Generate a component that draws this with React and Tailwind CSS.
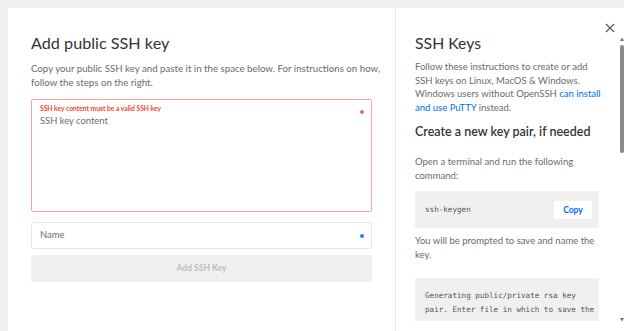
import React from "react";

export default function App() {
  const font = { fontFamily: "Lato, 'Open Sans', sans-serif" };
  const mono = { fontFamily: "'DejaVu Sans Mono', 'Liberation Mono', monospace" };
  return (
    <div className="w-[624px] h-[331px] overflow-hidden bg-[#efefef] pt-[8px] pl-[8px]" style={font}>
      <div className="relative flex h-[323px] bg-white">
        {/* Left column */}
        <div className="w-[388px] shrink-0 border-r border-[#e6e6e6] pl-[23px] pr-[23px] pt-[25px]">
          <h1 className="text-[16.2px] leading-[20px] text-[#333] font-normal">Add public SSH key</h1>
          <p className="mt-[8px] whitespace-nowrap text-[9.7px] leading-[14px] text-[#6b6b6b]">
            Copy your public SSH key and paste it in the space below. For instructions on how,
            <br />
            follow the steps on the right.
          </p>
          <div className="relative mt-[10px] h-[113px] rounded-[2px] border border-[#f7a596] pl-[8px] pt-[4px]">
            <div className="text-[6.7px] leading-[9px] font-bold text-[#f0452d]">SSH key content must be a valid SSH key</div>
            <div className="mt-[1px] text-[9.4px] leading-[13px] text-[#6e6e6e]">SSH key content</div>
            <span className="absolute right-[7px] top-[10px] h-[4px] w-[4px] rounded-full bg-[#f36b55]"></span>
          </div>
          <div className="relative mt-[10px] flex h-[27px] items-center rounded-[2px] border border-[#e6e6e6] pl-[8px]">
            <span className="text-[9.4px] text-[#6e6e6e]">Name</span>
            <span className="absolute right-[7px] top-[11px] h-[4px] w-[4px] rounded-full bg-[#2f7cf6]"></span>
          </div>
          <div className="mt-[6px] flex h-[27px] items-center justify-center rounded-[2px] bg-[#f0f0f0]">
            <span className="text-[8.5px] font-bold text-[#bdbdbd]">Add SSH Key</span>
          </div>
        </div>

        {/* Right column */}
        <div className="relative flex-1 pl-[19px]">
          <div className="mt-[25px] h-[288px] w-[190px] overflow-hidden">
            <h2 className="text-[15.8px] leading-[20px] text-[#333] font-normal">SSH Keys</h2>
            <p className="mt-[7px] whitespace-nowrap text-[9.5px] leading-[13.6px] text-[#6b6b6b]">
              Follow these instructions to create or add
              <br />
              SSH keys on Linux, MacOS &amp; Windows.
              <br />
              Windows users without OpenSSH <span className="text-[#0069ff]">can install</span>
              <br />
              <span className="text-[#0069ff]">and use PuTTY</span> instead.
            </p>
            <h3 className="mt-[10px] text-[12.5px] leading-[16px] font-semibold text-[#333]">Create a new key pair, if needed</h3>
            <p className="mt-[15px] whitespace-nowrap text-[9.5px] leading-[14px] text-[#6b6b6b]">
              Open a terminal and run the following
              <br />
              command:
            </p>
            <div className="mt-[8px] flex h-[37px] w-[184px] items-center justify-between bg-[#f0f0f0] pl-[10px] pr-[7px]">
              <span className="text-[7.6px] text-[#555]" style={mono}>ssh-keygen</span>
              <span className="flex h-[18px] w-[38px] items-center justify-center bg-white text-[8.5px] font-bold text-[#0069ff]">Copy</span>
            </div>
            <p className="mt-[6px] whitespace-nowrap text-[9.5px] leading-[14px] text-[#6b6b6b]">
              You will be prompted to save and name the
              <br />
              key.
            </p>
            <div className="mt-[16px] h-[60px] w-[184px] overflow-hidden bg-[#f0f0f0] pl-[10px] pr-[4px] pt-[11px]">
              <div className="whitespace-nowrap text-[7.6px] leading-[14px] text-[#555]" style={mono}>
                Generating public/private rsa key
                <br />
                pair. Enter file in which to save the
              </div>
            </div>
          </div>

          {/* close */}
          <svg className="absolute right-[9px] top-[15px]" width="10" height="10" viewBox="0 0 10 10">
            <path d="M1 1 L9 9 M9 1 L1 9" stroke="#555" strokeWidth="1.1" />
          </svg>

          {/* scrollbar */}
          <div className="absolute right-0 top-[29px] h-[285px] w-[5px]">
            <svg className="absolute left-[1px] top-[0px]" width="4" height="4" viewBox="0 0 4 4">
              <path d="M0 4 L2 0.5 L4 4 Z" fill="#777" />
            </svg>
            <div className="absolute left-[1px] top-[8px] h-[108px] w-[4px] rounded-[2px] bg-[#8a8a8a]"></div>
            <svg className="absolute left-[1px] bottom-[0px]" width="4" height="4" viewBox="0 0 4 4">
              <path d="M0 0 L2 3.5 L4 0 Z" fill="#777" />
            </svg>
          </div>
        </div>
      </div>
    </div>
  );
}
